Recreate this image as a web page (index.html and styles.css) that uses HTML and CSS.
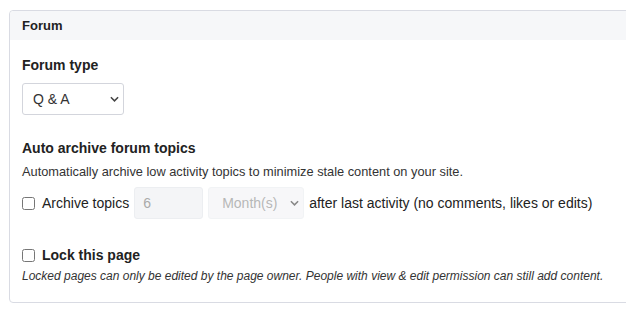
FILE: index.html
```html
<!DOCTYPE html>
<html>
	<head>
		<meta charset="UTF-8">
		<link rel="stylesheet" href="styles.css">
		<title>Forum settings</title>
	</head>
	<body>
		<div class="panel">
			<div class="panel-head">Forum</div>
			<div class="panel-body">
				<div class="field">
					<label class="field-title" for="forumtype">Forum type</label>
					<div class="select-wrap">
						<select id="forumtype" class="select">
							<option>Q &amp; A</option>
						</select>
						<svg class="chevron" viewBox="0 0 10 6" width="9" height="6"><path d="M1 1 L5 5 L9 1" fill="none" stroke="#444" stroke-width="1.7"/></svg>
					</div>
				</div>
				<div class="field">
					<div class="field-title">Auto archive forum topics</div>
					<div class="field-desc">Automatically archive low activity topics to minimize stale content on your site.</div>
					<div class="archive-row">
						<input type="checkbox" class="check" id="archive">
						<label for="archive">Archive topics</label>
						<input type="text" class="num" value="6" disabled>
						<div class="select-wrap">
							<select class="select period" disabled>
								<option>Month(s)</option>
							</select>
							<svg class="chevron" viewBox="0 0 10 6" width="9" height="6"><path d="M1 1 L5 5 L9 1" fill="none" stroke="#888" stroke-width="1.7"/></svg>
						</div>
						<span>after last activity (no comments, likes or edits)</span>
					</div>
				</div>
				<div class="field lock">
					<div class="lock-row">
						<input type="checkbox" class="check" id="lock">
						<label for="lock">Lock this page</label>
					</div>
					<div class="lock-desc">Locked pages can only be edited by the page owner. People with view &amp; edit permission can still add content.</div>
				</div>
			</div>
		</div>
	</body>
</html>
```

FILE: styles.css
```css
* {
	box-sizing: border-box;
	font-family: "Liberation Sans", Arial, sans-serif
}

body {
	margin: 0;
	background: white;
	color: #222;
	overflow: hidden;
}

.panel {
	margin: 10px 0 0 9px;
	width: 660px;
	border: 1px solid #d9dbe3;
	border-radius: 4px;
}

.panel-head {
	height: 29px;
	padding: 7px 12px 0;
	background: #f6f7f9;
	font-size: 13px;
	font-weight: bold;
	border-radius: 4px 4px 0 0
}

.panel-body {
	padding: 17px 12px 19px;
}

.field {
	margin-bottom: 25px
}

.field-title {
	display: block;
	font-size: 14px;
	font-weight: bold;
	margin-bottom: 10px
}

.field-desc {
	font-size: 12.8px;
	color: #333;
	margin-top: -2px;
	margin-bottom: 8px
}

.select-wrap {
	position: relative;
	display: inline-block;
}

.select {
	appearance: none;
	width: 102px;
	height: 32px;
	padding: 0 10px;
	font-size: 14px;
	color: #333;
	background: white;
	border: 1px solid #d3d5dc;
	border-radius: 3px;
}

.chevron {
	position: absolute;
	right: 5px;
	top: 13px;
	pointer-events: none
}

.archive-row {
	display: flex;
	align-items: center;
	gap: 5px;
	font-size: 14px
}

.check {
	width: 13px;
	height: 13px;
	margin: 0 2px 0 0;
}

.num {
	width: 69px;
	height: 32px;
	padding: 0 8px;
	font-size: 14px;
	color: #aaa;
	background: #f4f5f7;
	border: 1px solid #eceef1;
	border-radius: 3px;
}

.period {
	width: 96px;
	color: #999;
	background: #f4f5f7;
	border-color: #eceef1;
	padding: 0 8px 0 13px
}

.lock {
	margin-top: 28px;
	margin-bottom: 0
}

.lock-row {
	display: flex;
	align-items: center;
	gap: 7px;
	font-size: 14px;
	font-weight: bold;
	margin-bottom: 6px
}

.lock-row .check {
	margin: 0
}

.lock-desc {
	font-size: 12px;
	font-style: italic;
	color: #333
}
```
